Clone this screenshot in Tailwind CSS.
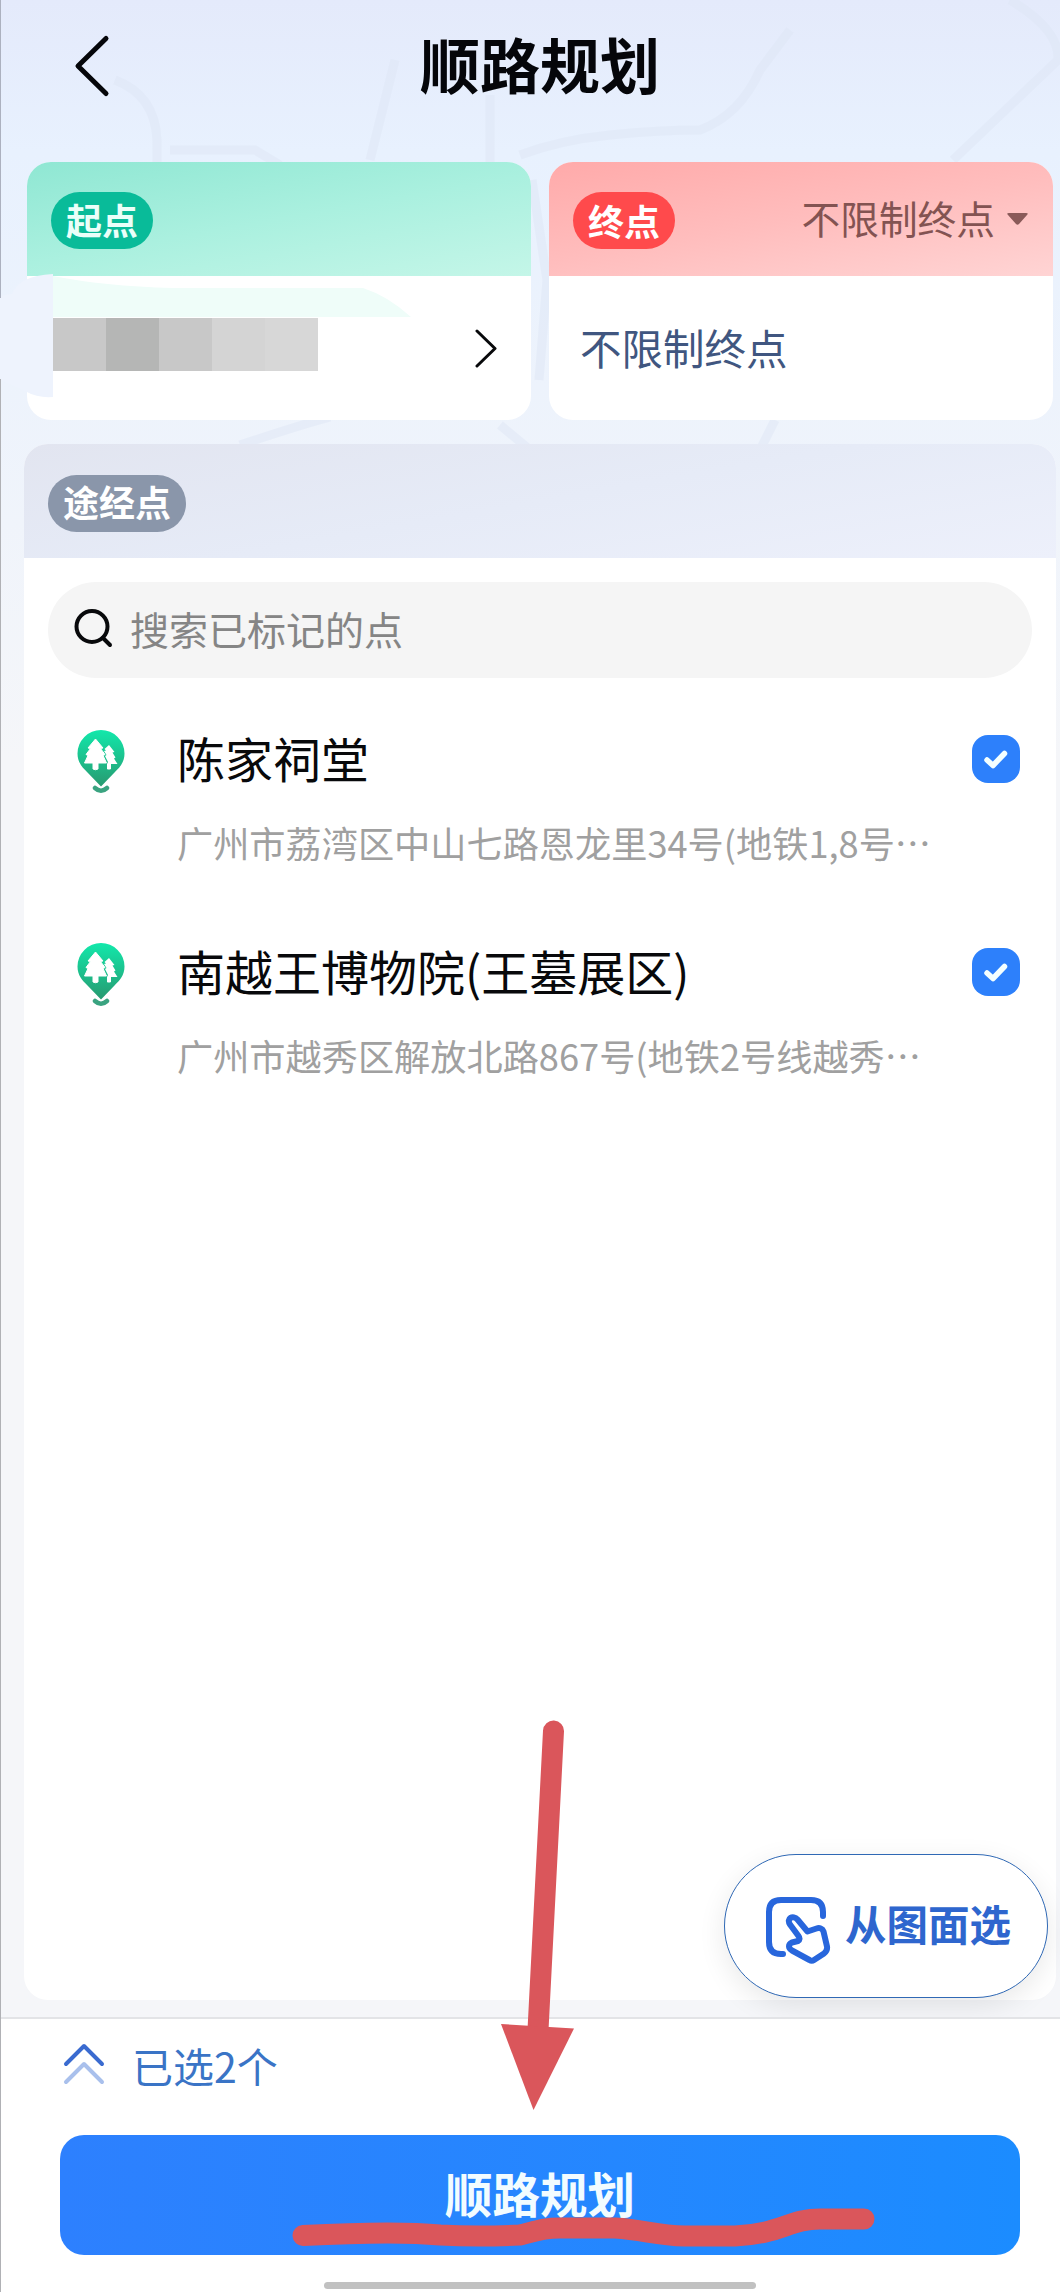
<!DOCTYPE html>
<html lang="zh-CN">
<head>
<meta charset="utf-8">
<title>顺路规划</title>
<script src="https://cdn.jsdelivr.net/npm/@tailwindcss/browser@4"></script>
</head>
<body class="bg-[#f4f6f9]">
<main class="relative isolate flex h-[2292px] w-[1060px] flex-col overflow-hidden bg-[#f5f6f9] font-['Noto_Sans_CJK_SC',sans-serif] leading-none">
  <!-- faint map backdrop -->
  <div class="absolute inset-x-0 top-0 -z-10 h-[760px] bg-linear-to-b from-[#e4eafb] via-[#e8f1fe] via-20% to-[#f5f6f9]">
    <svg class="h-full w-full" viewBox="0 0 1060 760" fill="none" stroke="#dfe7f6" stroke-width="9" opacity=".5">
      <path d="M115 80q40 15 42 60v22M170 150h85l25 15M395 60l-25 100M490 95v70M520 155q40-15 90-20t90-5q40-15 60-60l30-40M1010 0q50 30 48 60l-105 100"/>
      <path d="M532 180l15 100-8 100M775 420l-15 30M240 445q60-20 90-28M500 425l30 25"/>
    </svg>
  </div>

  <header class="grid h-[132px] grid-cols-3 items-center">
    <svg class="ml-[72px] h-[66px] w-10" viewBox="0 0 40 66" fill="none" stroke="#05060a" stroke-width="5" stroke-linecap="round" stroke-linejoin="round"><path d="M34 5.500L6 33l28 27.500"/></svg>
    <h1 class="-mt-1.5 justify-self-center pl-5 text-[60px] font-bold whitespace-nowrap text-[#05060a]">顺路规划</h1>
  </header>

  <section class="mt-[30px] ml-[27px] flex h-[258px] gap-[18px]">
    <div class="relative w-[504px] rounded-[24px] bg-white">
      <div class="flex h-[114px] items-center rounded-t-[24px] bg-linear-170 from-[#8fe7d3] via-[#aaf0df] to-[#c4f6e8] pl-6">
        <span class="mt-0.5 flex h-[57px] w-[102px] items-center justify-center rounded-full bg-[#09bb99] pb-0.5 text-[36px] font-bold text-[#eafff9]">起点</span>
      </div>
      <svg class="absolute top-[112px] -left-[27px] h-[130px] w-[440px]" viewBox="0 0 440 130">
        <path d="M53 0Q18 2 12 20L0 22v84l27 12q10 6 26 5z" fill="#eef3fd"/>
        <path d="M53 2q50 10 120 12h190q25 8 48 29H53z" fill="#effdf9"/>
      </svg>
      <div class="relative flex h-[144px] items-center justify-between pr-[33px] pl-[26px]">
        <div class="mt-[-7px] flex h-[53px] *:w-[53px]">
          <i class="bg-[#c8c8c8]"></i><i class="bg-[#b5b6b5]"></i><i class="bg-[#c8c8c8]"></i><i class="bg-[#d4d4d4]"></i><i class="bg-[#d7d7d7]"></i>
        </div>
        <svg class="h-10 w-6" viewBox="0 0 24 40" fill="none" stroke="#08090b" stroke-width="3" stroke-linecap="round" stroke-linejoin="round"><path d="M3 3l18 17.500L3 38"/></svg>
      </div>
    </div>
    <div class="w-[504px] rounded-[24px] bg-white">
      <div class="flex h-[114px] items-center justify-between rounded-t-[24px] bg-linear-170 from-[#ffaaaa] via-[#ffbdbd] to-[#ffd4d4] pr-[25px] pl-6">
        <span class="mt-0.5 flex h-[57px] w-[102px] items-center justify-center rounded-full bg-[#ff4a4c] text-[36px] font-bold text-white">终点</span>
        <span class="flex items-center gap-3 text-[38.700px] text-[#835352]"><span class="-mt-1">不限制终点</span><svg class="h-3 w-[21px]" viewBox="0 0 21 12" fill="#8a5a59"><path d="M2 0h17q3 0 1 2l-8 9q-1.500 1.500-3 0L1 2Q-1 0 2 0z"/></svg></span>
      </div>
      <div class="flex h-[144px] items-center pl-[31px] text-[41.500px] text-[#405680]">不限制终点</div>
    </div>
  </section>

  <section class="mt-6 ml-6 flex h-[1556px] w-[1032px] flex-col rounded-[24px] bg-white">
    <div class="flex h-[114px] shrink-0 items-center rounded-t-[24px] bg-linear-170 from-[#e2e5f0] via-[#e6ebf7] to-[#edf0fb] pl-6">
      <span class="mt-1 flex h-[57px] w-[138px] items-center justify-center rounded-full bg-[#8a96aa] pb-1 text-[36px] font-bold text-white">途经点</span>
    </div>
    <div class="mx-6 mt-6 flex h-24 shrink-0 items-center rounded-full bg-[#f5f5f5] pl-[26px]">
      <svg class="-mt-1 h-10 w-10" viewBox="0 0 40 40" fill="none" stroke="#08090b" stroke-width="4" stroke-linecap="round"><circle cx="18" cy="18.500" r="15.500"/><path d="M29 30l7 7"/></svg>
      <span class="-mt-1 ml-4 text-[39px] text-[#858585]">搜索已标记的点</span>
    </div>

    <div class="mt-[45px] flex h-[213px] shrink-0">
      <svg class="mt-[5px] ml-[52px] h-[68px] w-[50px]" viewBox="0 0 50 68">
        <defs><linearGradient id="pin" x2="0" y2="1"><stop stop-color="#12e8ab"/><stop offset="1" stop-color="#279a70"/></linearGradient></defs>
        <path d="M25 2a23.500 23.500 0 0 0-23.500 23.500c0 9 5 14 10 19L25 58.500l13.500-14c5-5 10-10 10-19A23.500 23.500 0 0 0 25 2z" fill="url(#pin)"/>
        <path d="M19.500 11l7.500 9-2.500.5 4.500 6-2 1 3.500 7.500H22V41q-2.500 1.500-5 0v-6H8.500l3.500-7.500-2-1 4.500-6-2.500-.5z" fill="#fff" stroke="#fff" stroke-linejoin="round"/>
        <path d="M33 17l5.500 7-2 .5 3 5-1.500 1L41.500 36h-6.500v5q-2.500 1-4 0v-5l1-2-3-6 1.500-1-2.500-4 2-.5-1.500-1.500z" fill="#fff"/>
        <path d="M19 60q6 5.500 12 0" fill="none" stroke="#3aa380" stroke-width="4.500" stroke-linecap="round"/>
      </svg>
      <div class="ml-[51px] w-[791px] whitespace-nowrap">
        <h2 class="mt-2.5 text-[48px] text-[#08090b]">陈家祠堂</h2>
        <p class="mt-[43px] text-[36.200px] text-[#a0a0a0]">广州市荔湾区中山七路恩龙里34号(地铁1,8号⋯</p>
      </div>
      <span class="mt-3 ml-1 flex size-12 items-center justify-center rounded-[16px] bg-[#2d80fb]"><svg class="size-6" viewBox="0 0 24 24" fill="none" stroke="#f4ffff" stroke-width="5.500" stroke-linecap="round" stroke-linejoin="round"><path d="M3 13l6 5.500L20.500 6.500"/></svg></span>
    </div>

    <div class="flex h-[213px] shrink-0">
      <svg class="mt-[5px] ml-[52px] h-[68px] w-[50px]" viewBox="0 0 50 68">
        <path d="M25 2a23.500 23.500 0 0 0-23.500 23.500c0 9 5 14 10 19L25 58.500l13.500-14c5-5 10-10 10-19A23.500 23.500 0 0 0 25 2z" fill="url(#pin)"/>
        <path d="M19.500 11l7.500 9-2.500.5 4.500 6-2 1 3.500 7.500H22V41q-2.500 1.500-5 0v-6H8.500l3.500-7.500-2-1 4.500-6-2.500-.5z" fill="#fff" stroke="#fff" stroke-linejoin="round"/>
        <path d="M33 17l5.500 7-2 .5 3 5-1.500 1L41.500 36h-6.500v5q-2.500 1-4 0v-5l1-2-3-6 1.500-1-2.500-4 2-.5-1.500-1.500z" fill="#fff"/>
        <path d="M19 60q6 5.500 12 0" fill="none" stroke="#3aa380" stroke-width="4.500" stroke-linecap="round"/>
      </svg>
      <div class="ml-[51px] w-[791px] whitespace-nowrap">
        <h2 class="mt-2.5 text-[48px] text-[#08090b]">南越王博物院(王墓展区)</h2>
        <p class="mt-[43px] text-[36.200px] text-[#a0a0a0]">广州市越秀区解放北路867号(地铁2号线越秀⋯</p>
      </div>
      <span class="mt-3 ml-1 flex size-12 items-center justify-center rounded-[16px] bg-[#2d80fb]"><svg class="size-6" viewBox="0 0 24 24" fill="none" stroke="#f4ffff" stroke-width="5.500" stroke-linecap="round" stroke-linejoin="round"><path d="M3 13l6 5.500L20.500 6.500"/></svg></span>
    </div>
  </section>

  <!-- floating map picker -->
  <button class="absolute top-[1854px] left-[724px] flex h-[144px] w-[324px] items-center rounded-full border-[1.500px] border-[#3069b5] bg-white pl-[39px] shadow-[0_8px_28px_rgba(0,0,0,0.09)]">
    <svg class="mt-2 h-[70px] w-[68px]" viewBox="0 0 68 70" fill="none" stroke="#2866dc" stroke-width="6" stroke-linecap="round" stroke-linejoin="round">
      <path d="M59 21v-4Q59 5 47 5H17Q5 5 5 17v30Q5 59 17 59h2"/>
      <path d="M34.500 41L26 29.500c-4-6 3-10 7.500-5l10 12 9-3c3-1 6 0 7 3l3.500 15c.5 3-.5 5-3 7L50 65c-1.500 1-3 1-4.500 0L28 55.500c-4-2.500-4-6 0-8l6-1.500c2-1 2-3 .5-5z"/>
    </svg>
    <span class="-mt-1 ml-[13px] text-[41.500px] font-bold text-[#2e66ce]">从图面选</span>
  </button>

  <footer class="relative mt-[17px] flex grow flex-col border-t-2 border-[#e3e4e7] bg-white">
    <div class="flex h-[116px] items-center pb-6 pl-[62px]">
      <svg class="-mt-1 h-11 w-11" viewBox="0 0 44 44" fill="none" stroke-width="4" stroke-linecap="round" stroke-linejoin="round"><path d="M4 41l18-18 18 18" stroke="#a9c0ec"/><path d="M4 23L22 5l18 18" stroke="#3a6bd0"/></svg>
      <span class="ml-[26px] text-[41px] text-[#3a74c6]">已选2个</span>
    </div>
    <button class="ml-[60px] flex h-[120px] w-[960px] items-center justify-center rounded-[24px] bg-linear-to-r from-[#2d80fe] to-[#1b8cff] pb-1 text-[47.500px] font-bold text-[#f2fcff]">顺路规划</button>
    <div class="mt-[27px] ml-[324px] h-[7px] w-[432px] rounded-full bg-[#c1c1c1]"></div>
  </footer>

  <!-- hand-drawn annotation -->
  <svg class="pointer-events-none absolute top-[1700px] left-0 h-[592px] w-[1060px]" viewBox="0 1700 1060 592" fill="none" stroke="#da565b" stroke-width="21" stroke-linecap="round" stroke-linejoin="round">
    <path d="M553.500 1731L538 2030"/>
    <path d="M501 2024l73 4.500-40.500 81.500z" fill="#da565b" stroke="none"/>
    <path d="M303 2235.500C350 2233 400 2231 440 2235C475 2237 500 2236 520 2235C540 2230 545 2228 560 2228H615C645 2230 655 2235 685 2236H735C780 2234 790 2219 820 2219H864"/>
  </svg>
  <div class="pointer-events-none absolute top-0 left-0 h-[298px] w-px bg-[#acb1bf]"></div>
  <div class="pointer-events-none absolute top-[379px] left-0 h-[1913px] w-px bg-[#b0b1b5]"></div>
</main>
</body>
</html>
